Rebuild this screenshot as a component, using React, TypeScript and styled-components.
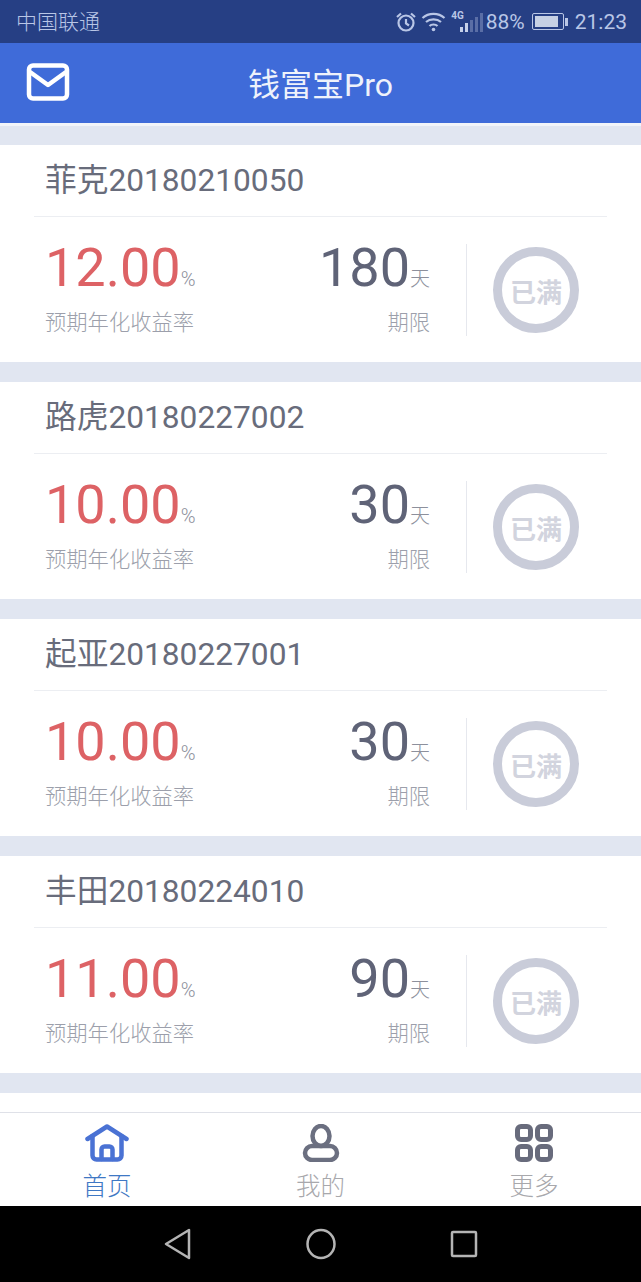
import styled, { createGlobalStyle } from 'styled-components'

const products = [
  { name: '菲克20180210050', rate: '12.00', days: '180' },
  { name: '路虎20180227002', rate: '10.00', days: '30' },
  { name: '起亚20180227001', rate: '10.00', days: '30' },
  { name: '丰田20180224010', rate: '11.00', days: '90' },
]

export default function App() {
  return (
    <Screen>
      <GlobalStyle />
      <StatusBar>
        <Carrier>中国联通</Carrier>
        <StatusIcons>
          <svg width="22" height="22" viewBox="0 0 22 22" fill="none" stroke="#b9c6e6" strokeWidth="2.200">
            <circle cx="11" cy="12" r="7.500" />
            <path d="M11 8v4.500l3 2M2 6l4-3.500M20 6l-4-3.500" />
          </svg>
          <WifiIcon width="25" height="22" viewBox="0 0 25 22" fill="none" stroke="#b9c6e6" strokeWidth="2.200">
            <path d="M1.500 7c6-5.500 16-5.500 22 0M5 11c4-3.500 11-3.500 15 0M8.500 15c2-2 6-2 8 0" />
            <circle cx="12.500" cy="18.500" r="1.800" fill="#b9c6e6" stroke="none" />
          </WifiIcon>
          <Network>4G</Network>
          <Signal>
            <Bar $h={5} $on />
            <Bar $h={9} $on />
            <Bar $h={12} />
            <Bar $h={15} />
            <Bar $h={19} />
          </Signal>
          <StatusText>88%</StatusText>
          <Battery>
            <BatteryFill />
          </Battery>
          <BatteryTip />
          <Clock>21:23</Clock>
        </StatusIcons>
      </StatusBar>
      <Header>
        <MailButton>
          <svg width="44" height="38" viewBox="0 0 44 38" fill="none" stroke="#fff" strokeWidth="4.500" strokeLinejoin="round">
            <rect x="3" y="2.500" width="38" height="33" rx="4" />
            <path d="M4 9l18 13 18-13" />
          </svg>
        </MailButton>
        <Title>钱富宝Pro</Title>
      </Header>
      <HeaderEdge />
      <List>
        {products.map(p => (
          <Card key={p.name}>
            <CardTitle>{p.name}</CardTitle>
            <CardBody>
              <RateCol>
                <Figure>
                  <RateValue>{p.rate}</RateValue>
                  <Unit>%</Unit>
                </Figure>
                <Caption>预期年化收益率</Caption>
              </RateCol>
              <TermCol>
                <Figure>
                  <TermValue>{p.days}</TermValue>
                  <Unit>天</Unit>
                </Figure>
                <Caption>期限</Caption>
              </TermCol>
              <StampCol>
                <Stamp>已满</Stamp>
              </StampCol>
            </CardBody>
          </Card>
        ))}
        <PartialCard />
      </List>
      <TabBar>
        <Tab>
          <svg width="44" height="38" viewBox="0 0 44 38" fill="none" stroke="#4a72d4" strokeWidth="4.500" strokeLinejoin="round" strokeLinecap="round">
            <path d="M2.500 15L22 2.500 41.500 15" />
            <path d="M7.500 12v19.500a4 4 0 0 0 4 4h21a4 4 0 0 0 4-4V12" />
            <path d="M16.500 35V25.500a3 3 0 0 1 3-3h5a3 3 0 0 1 3 3V35" />
          </svg>
          <TabLabel $active>首页</TabLabel>
        </Tab>
        <Tab>
          <svg width="38" height="38" viewBox="0 0 38 38" fill="none" stroke="#6b6f80" strokeWidth="4.500">
            <ellipse cx="19" cy="12" rx="8.500" ry="10" />
            <rect x="3" y="22" width="32" height="14" rx="7" />
          </svg>
          <TabLabel>我的</TabLabel>
        </Tab>
        <Tab>
          <svg width="38" height="38" viewBox="0 0 38 38" fill="none" stroke="#686b7c" strokeWidth="5">
            <rect x="2.500" y="2.500" width="13" height="13" rx="3.500" />
            <rect x="22.500" y="2.500" width="13" height="13" rx="3.500" />
            <rect x="2.500" y="22.500" width="13" height="13" rx="3.500" />
            <rect x="22.500" y="22.500" width="13" height="13" rx="3.500" />
          </svg>
          <TabLabel>更多</TabLabel>
        </Tab>
      </TabBar>
      <NavBar>
        <svg width="28" height="32" viewBox="0 0 28 32" fill="none" stroke="#b4b4b4" strokeWidth="2.500" strokeLinejoin="round">
          <path d="M25 2v28L2 16z" />
        </svg>
        <svg width="30" height="32" viewBox="0 0 30 32" fill="none" stroke="#b4b4b4" strokeWidth="2.500">
          <ellipse cx="15" cy="16" rx="13.500" ry="14" />
        </svg>
        <svg width="28" height="28" viewBox="0 0 28 28" fill="none" stroke="#b4b4b4" strokeWidth="2.500">
          <rect x="2" y="2" width="24" height="24" rx="1" />
        </svg>
      </NavBar>
    </Screen>
  )
}

const cjk = `Roboto, "Noto Sans CJK SC", sans-serif`

const GlobalStyle = createGlobalStyle`
  html, body {
    margin: 0;
    padding: 0;
    background: #fff;
  }
  * {
    box-sizing: border-box;
  }
`

const Screen = styled.div`
  width: 641px;
  height: 1282px;
  display: flex;
  flex-direction: column;
  overflow: hidden;
  font-family: ${cjk};
`

const StatusBar = styled.div`
  height: 43px;
  flex: none;
  display: flex;
  align-items: center;
  justify-content: space-between;
  padding: 0 14px 0 16px;
  background: #263f84;
  color: #b9c6e6;
`

const Carrier = styled.span`
  margin-bottom: 3px;
  font-size: 21px;
  font-weight: 300;
`

const StatusIcons = styled.div`
  display: flex;
  align-items: center;
`

const WifiIcon = styled.svg`
  margin-left: 4px;
`

const Network = styled.span`
  font-size: 10px;
  font-weight: 700;
  margin: -12px 0 0 5px;
`

const Signal = styled.div`
  display: flex;
  align-items: flex-end;
  gap: 2px;
  height: 20px;
  margin-left: -4px;
`

const Bar = styled.i<{ $h: number; $on?: boolean }>`
  width: 3px;
  height: ${p => p.$h}px;
  background: ${p => (p.$on ? '#c6d1ea' : '#5a6ea6')};
`

const StatusText = styled.span`
  font-size: 21px;
  margin-left: 3px;
`

const Battery = styled.div`
  width: 32px;
  height: 17px;
  margin-left: 7px;
  padding: 2px;
  border: 1.500px solid #b9c6e6;
  border-radius: 2px;
`

const BatteryFill = styled.div`
  width: 88%;
  height: 100%;
  background: #c6d0e4;
`

const BatteryTip = styled.div`
  width: 3px;
  height: 8px;
  margin: 0 7px 0 1px;
  background: #b9c6e6;
`

const Clock = styled.span`
  font-size: 21px;
`

const Header = styled.header`
  position: relative;
  height: 80px;
  flex: none;
  display: flex;
  align-items: center;
  justify-content: center;
  background: #3f6bd9;
`

const MailButton = styled.div`
  position: absolute;
  left: 26px;
  top: 20px;
  display: flex;
`

const Title = styled.h1`
  margin: 0 0 2px;
  font-size: 32px;
  font-weight: 400;
  color: #eef2fb;
`

const HeaderEdge = styled.div`
  height: 3px;
  flex: none;
  background: #f2f4f9;
`

const List = styled.div`
  flex: 1;
  min-height: 0;
  padding-top: 19px;
  display: flex;
  flex-direction: column;
  gap: 20px;
  background: #e1e6f1;
  overflow: hidden;
`

const Card = styled.article`
  height: 217px;
  flex: none;
  padding: 0 34px;
  background: #fff;
`

const PartialCard = styled.div`
  height: 30px;
  flex: none;
  background: #fff;
`

const CardTitle = styled.h2`
  height: 72px;
  margin: 0;
  padding: 14px 0 0 11px;
  font-size: 31.700px;
  line-height: 44px;
  font-weight: 400;
  color: #686c7b;
  border-bottom: 1px solid #eceef2;
  white-space: nowrap;
`

const CardBody = styled.div`
  height: 145px;
  display: grid;
  grid-template-columns: 210px 186px 1fr;
  padding-top: 24px;
`

const RateCol = styled.div`
  padding-left: 11px;
`

const TermCol = styled.div`
  display: flex;
  flex-direction: column;
  align-items: flex-end;
`

const Figure = styled.div`
  display: flex;
  align-items: baseline;
  height: 54px;
  line-height: 54px;
  white-space: nowrap;
`

const RateValue = styled.span`
  font-size: 54px;
  color: #dd6265;
`

const TermValue = styled.span`
  font-size: 54px;
  color: #5f6377;
`

const Unit = styled.span`
  margin-left: 0;
  font-size: 20px;
  font-weight: 300;
  color: #8d909c;
`

const Caption = styled.div`
  margin-top: 14px;
  font-size: 21.300px;
  line-height: 28px;
  font-weight: 300;
  color: #9c9fab;
  white-space: nowrap;
`

const StampCol = styled.div`
  height: 92px;
  margin: 3px 0 0 36px;
  padding-left: 26px;
  border-left: 1px solid #e6e8ee;
  display: flex;
  align-items: center;
`

const Stamp = styled.div`
  width: 86px;
  height: 86px;
  flex: none;
  display: flex;
  align-items: center;
  justify-content: center;
  border: 9px solid #c9ccd9;
  border-radius: 50%;
  font-size: 26px;
  font-weight: 700;
  color: #d2d4de;
  white-space: nowrap;
`

const TabBar = styled.nav`
  height: 94px;
  flex: none;
  display: grid;
  grid-template-columns: 214px 213px 214px;
  padding-top: 11px;
  background: #fff;
  border-top: 1px solid #dfe1e8;
`

const Tab = styled.div`
  display: flex;
  flex-direction: column;
  align-items: center;
`

const TabLabel = styled.span<{ $active?: boolean }>`
  margin-top: 9px;
  font-size: 24.500px;
  line-height: 32px;
  font-weight: 300;
  color: ${p => (p.$active ? '#3f78c4' : '#a8a8ac')};
`

const NavBar = styled.div`
  height: 76px;
  flex: none;
  display: flex;
  align-items: center;
  justify-content: center;
  gap: 114px;
  background: #000;
`
